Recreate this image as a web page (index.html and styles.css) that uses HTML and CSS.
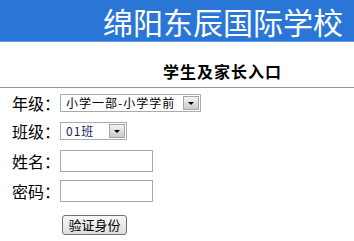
FILE: index.html
```html
<!DOCTYPE html>
<html lang="zh-CN">
  <head>
    <meta charset="UTF-8" />
    <meta name="viewport" content="width=device-width, initial-scale=1.0" />
    <title>学生及家长入口</title>
    <link rel="stylesheet" href="styles.css">
  </head>
  <body>
    <div class="header">绵阳东辰国际学校</div>
    <div class="title">学生及家长入口</div>
    <form class="login">
      <div class="row row-grade">
        <label class="label">年级：</label>
        <span class="select-wrap grade">
          <select class="select">
            <option>小学一部-小学学前</option>
          </select>
          <span class="arrow"></span>
        </span>
      </div>
      <div class="row row-class">
        <label class="label">班级：</label>
        <span class="select-wrap klass">
          <select class="select">
            <option>01班</option>
          </select>
          <span class="arrow"></span>
        </span>
      </div>
      <div class="row row-name">
        <label class="label">姓名：</label>
        <input class="text" type="text" />
      </div>
      <div class="row row-pass">
        <label class="label">密码：</label>
        <input class="text" type="password" />
      </div>
      <div class="row row-btn">
        <button class="btn" type="button">验证身份</button>
      </div>
    </form>
  </body>
</html>
```

FILE: styles.css
```css
* {
  box-sizing: border-box;
}
body {
  margin: 0;
  font-family: "Noto Sans CJK SC", "DejaVu Sans", sans-serif;
  color: #000;
  background: #fff;
}
.header {
  height: 42px;
  background-color: #2a76d6;
  border-bottom: 1px solid #5d9be6;
  color: #fff;
  font-size: 30px;
  line-height: 42px;
  text-align: right;
  padding-right: 11px;
}
.title {
  margin-top: 16px;
  height: 30px;
  padding-left: 163px;
  font-size: 16px;
  font-weight: bold;
  letter-spacing: 1px;
  line-height: 26px;
  border-bottom: 1px solid #8a969e;
}
.login {
  padding-left: 12px;
}
.row {
  display: flex;
  align-items: center;
}
.row-grade {
  margin-top: 6px;
  height: 18px;
}
.row-class {
  margin-top: 10px;
  height: 18px;
}
.row-name {
  margin-top: 10px;
  height: 22px;
}
.row-pass {
  margin-top: 8px;
  height: 22px;
}
.row-btn {
  margin-top: 13px;
  padding-left: 50px;
}
.label {
  width: 48px;
  font-size: 16px;
  line-height: 18px;
}
.select-wrap {
  position: relative;
  display: block;
  height: 18px;
}
.select-wrap.grade {
  width: 141px;
}
.select-wrap.klass {
  width: 67px;
}
.select {
  -webkit-appearance: none;
  appearance: none;
  display: block;
  width: 100%;
  height: 18px;
  margin: 0;
  padding: 0 0 0 5px;
  border: 1px solid #a5acb2;
  border-radius: 0;
  background: #fff;
  font-family: "Noto Sans CJK SC", sans-serif;
  font-size: 12px;
  letter-spacing: 1px;
  line-height: 16px;
  color: #000;
}
.klass .select {
  color: #1a1a5e;
}
.arrow {
  position: absolute;
  top: 2px;
  right: 2px;
  width: 16px;
  height: 14px;
  border: 1px solid #a5a5a5;
  background: linear-gradient(#f4f4f4, #c9c9c9);
  pointer-events: none;
}
.arrow::after {
  content: "";
  position: absolute;
  left: 4px;
  top: 5px;
  border-left: 3px solid transparent;
  border-right: 3px solid transparent;
  border-top: 3px solid #000;
}
.text {
  display: block;
  width: 93px;
  height: 22px;
  margin: 0;
  border: 1px solid #a8a8a8;
  padding: 0 3px;
}
.btn {
  width: 65px;
  height: 20px;
  padding: 0;
  border: 1px solid #707070;
  border-radius: 3px;
  background: linear-gradient(#f7f7f7, #dedede);
  font-family: "Noto Sans CJK SC", sans-serif;
  font-size: 13px;
  line-height: 16px;
  color: #000;
}
```
